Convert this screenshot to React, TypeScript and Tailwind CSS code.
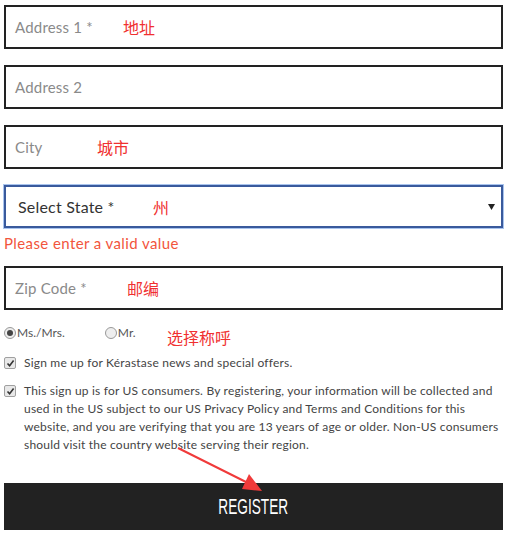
import React from 'react';

const base = { fontFamily: '"Lato", "Open Sans", sans-serif' };
const cjk = { fontFamily: '"Noto Sans CJK SC", sans-serif' };

function Field({ label, note, noteX }: { label: string; note?: string; noteX?: number }) {
  return (
    <div className="relative h-[44px] border-2 border-[#222] flex items-center pl-[9px] text-[15px] text-[#8a8a8a] tracking-[0.2px]">
      <span>{label}</span>
      {note && (
        <span className="absolute text-[16px] text-[#f03030] tracking-normal" style={{ ...cjk, left: noteX, top: 8 }}>
          {note}
        </span>
      )}
    </div>
  );
}

function Check() {
  return (
    <span className="w-[12px] h-[12px] shrink-0 rounded-[2px] border border-[#a0a0a0] bg-[#e8e8e8] flex items-center justify-center">
      <svg width="9" height="9" viewBox="0 0 9 9">
        <path d="M1.5 4.5 L3.6 6.8 L7.6 1.6" stroke="#333" strokeWidth="1.6" fill="none" />
      </svg>
    </span>
  );
}

export default function App() {
  return (
    <div className="relative w-[513px] h-[543px] bg-white pl-[4px] pr-[10px] pt-[5px]" style={base}>
      <Field label="Address 1 *" note="地址" noteX={117} />
      <div className="mt-[16px]">
        <Field label="Address 2" />
      </div>
      <div className="mt-[16px]">
        <Field label="City" note="城市" noteX={91} />
      </div>

      <div className="mt-[16px] relative h-[43px] border-2 border-[#3a5a9c] shadow-[0_0_0_1px_#a9c4ee] flex items-center pl-[12px] text-[16px] text-[#333] tracking-[0.2px]">
        <span>Select State *</span>
        <span className="absolute text-[16px] text-[#f03030]" style={{ ...cjk, left: 147, top: 8 }}>州</span>
        <svg className="absolute right-[6px] top-[17px]" width="7" height="6" viewBox="0 0 7 6">
          <path d="M0 0 H7 L3.5 6 Z" fill="#222" />
        </svg>
      </div>
      <div className="mt-[7px] text-[15px] leading-[16px] text-[#f2553c] tracking-[0.4px]">Please enter a valid value</div>

      <div className="mt-[15px]">
        <Field label="Zip Code *" note="邮编" noteX={121} />
      </div>

      <div className="relative mt-[16px] flex items-center h-[14px] text-[12px] text-[#555]">
        <span className="w-[12px] h-[12px] rounded-full border border-[#999] bg-[#eee] flex items-center justify-center">
          <span className="w-[6px] h-[6px] rounded-full bg-[#444]" />
        </span>
        <span className="ml-[1px]">Ms./Mrs.</span>
        <span className="ml-[40px] w-[12px] h-[12px] rounded-full border border-[#999] bg-[#eee]" />
        <span className="ml-[1px]">Mr.</span>
        <span className="absolute text-[16px] text-[#f03030]" style={{ ...cjk, left: 163, top: -1 }}>选择称呼</span>
      </div>

      <div className="mt-[14px] flex items-center gap-[8px] text-[12px] text-[#444] tracking-[0.2px]">
        <Check />
        <span>Sign me up for Kérastase news and special offers.</span>
      </div>

      <div className="mt-[10px] flex items-start gap-[8px] text-[12px] leading-[18px] text-[#444] tracking-[0.2px]">
        <span className="mt-[3px]"><Check /></span>
        <p>
          This sign up is for US consumers. By registering, your information will be collected and used in the US subject to our US Privacy Policy and Terms and Conditions for this website, and you are verifying that you are 13 years of age or older. Non-US consumers should visit the country website serving their region.
        </p>
      </div>

      <button className="mt-[29px] w-full h-[47px] bg-[#222] text-white flex items-center justify-center">
        <span className="inline-block text-[22px] scale-x-[0.62]" style={{ fontFamily: '"Liberation Sans", sans-serif' }}>REGISTER</span>
      </button>

      <svg className="absolute left-0 top-0 pointer-events-none" width="513" height="543">
        <line x1="178" y1="448" x2="250" y2="484" stroke="#f03a3a" strokeWidth="2" />
        <path d="M262 491 L242 489 L249 474 Z" fill="#f03a3a" />
      </svg>
    </div>
  );
}
